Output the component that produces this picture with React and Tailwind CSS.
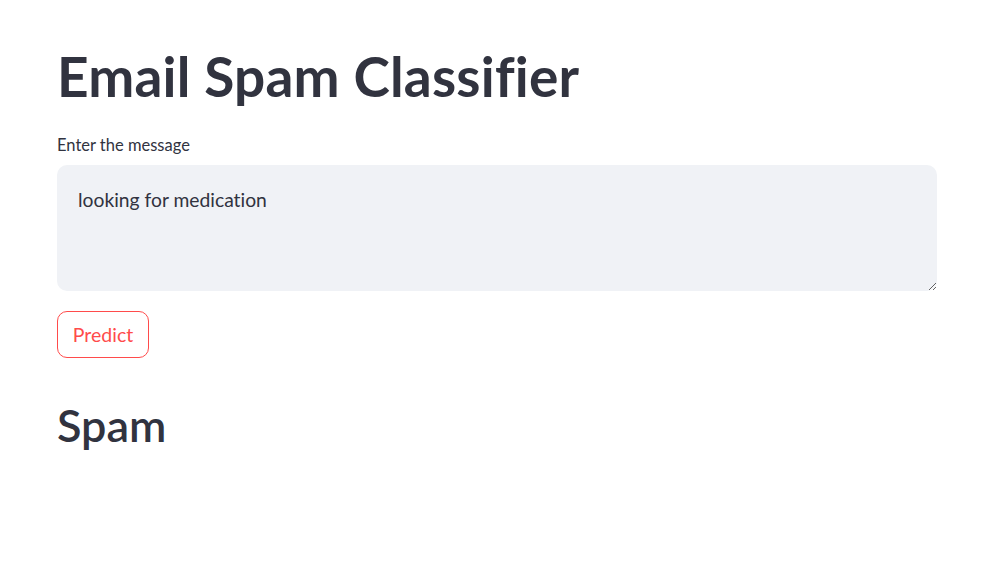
import React from "react"

const App = () => {
    return (
        <div className="min-h-screen bg-white text-[#31333f] [font-variant-ligatures:none]" style={{ fontFamily: "'Source Sans Pro', Lato, 'Noto Sans', sans-serif" }}>
            <div className="pl-[57px] pr-[50px] pt-[43px]">
                {/* Title */}
                <h1 className="text-[55px] font-bold leading-[1.2] tracking-[0.2px]">Email Spam Classifier</h1>

                {/* Message input */}
                <label className="block mt-[26px] text-[16.5px] leading-[20px]">Enter the message</label>
                <textarea
                    defaultValue="looking for medication"
                    className="block mt-[10px] w-full h-[126px] bg-[#f0f2f6] rounded-[10px] px-[21px] py-[22px] text-[19.3px] leading-[26px] text-[#31333f] outline-none resize-y [font-variant-ligatures:none]"
                />

                {/* Predict button */}
                <button className="mt-[20px] h-[47px] w-[92px] border border-[#ff4b4b] rounded-[10px] text-[#ff4b4b] text-[19.5px] bg-white">
                    Predict
                </button>

                {/* Result */}
                <h2 className="mt-[40px] text-[45px] font-semibold leading-[1.2]">Spam</h2>
            </div>
        </div>
    )
}

export default App
